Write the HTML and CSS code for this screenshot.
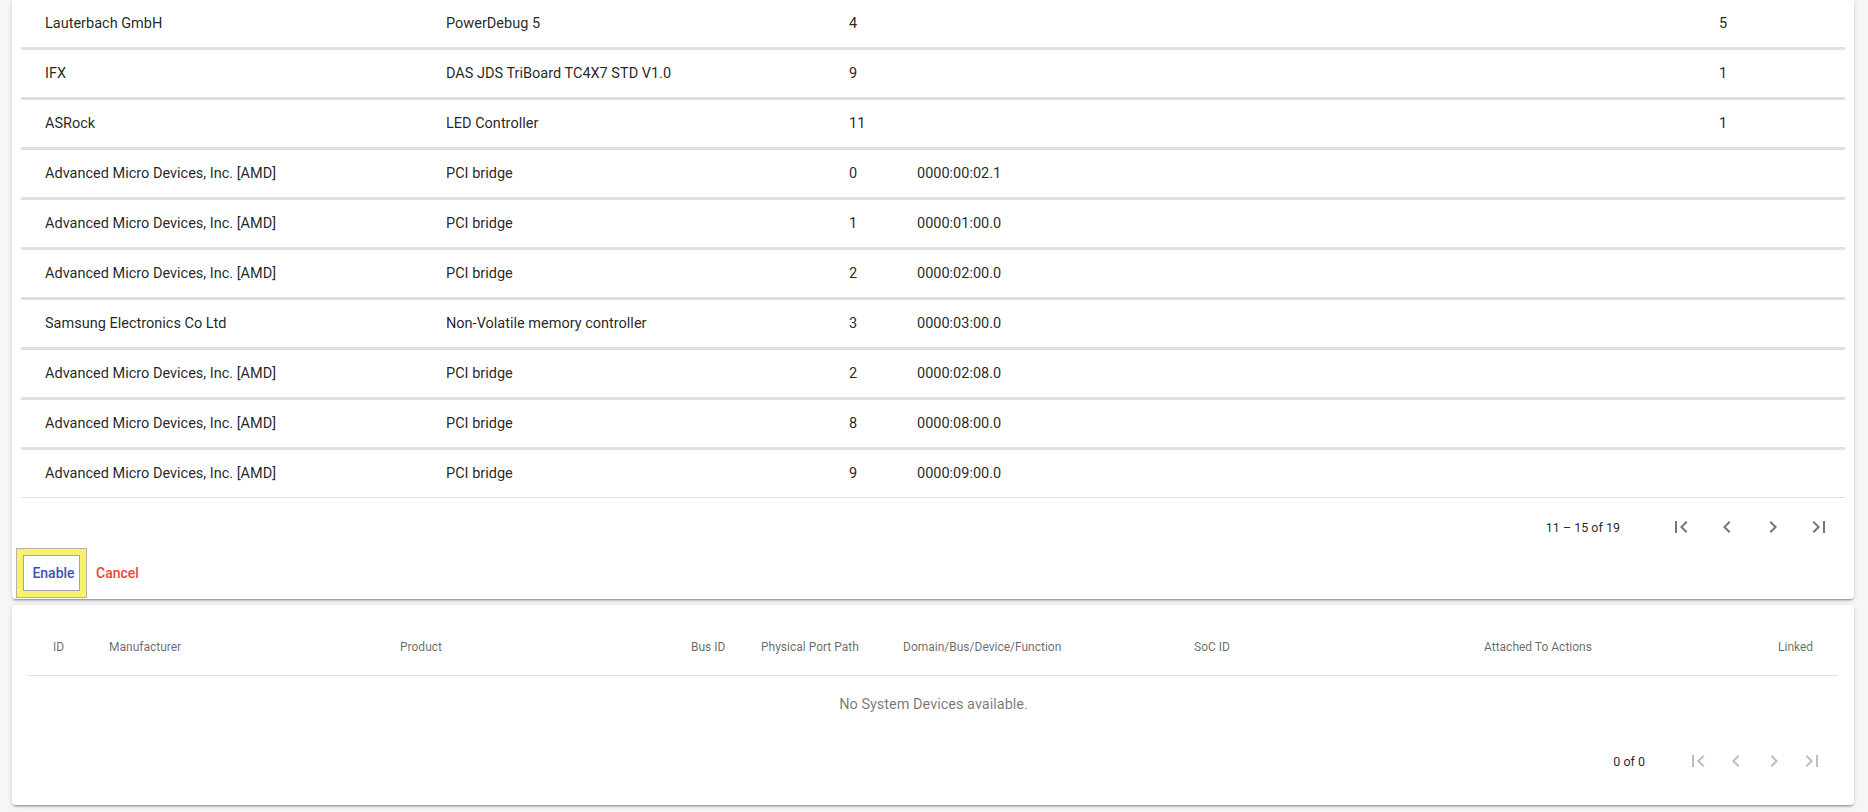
FILE: index.html
```html
<!DOCTYPE html>
<html>
<head>
<meta charset="utf-8">
<link rel="stylesheet" href="styles.css">
</head>
<body>
<div class="page">
  <section class="card card-top">
    <div class="table">
      <div class="row"><div class="c c1">Lauterbach GmbH</div><div class="c">PowerDebug 5</div><div class="c">4</div><div class="c"></div><div class="c">5</div></div>
      <div class="row"><div class="c c1">IFX</div><div class="c">DAS JDS TriBoard TC4X7 STD V1.0</div><div class="c">9</div><div class="c"></div><div class="c">1</div></div>
      <div class="row"><div class="c c1">ASRock</div><div class="c">LED Controller</div><div class="c">11</div><div class="c"></div><div class="c">1</div></div>
      <div class="row"><div class="c c1">Advanced Micro Devices, Inc. [AMD]</div><div class="c">PCI bridge</div><div class="c">0</div><div class="c">0000:00:02.1</div><div class="c"></div></div>
      <div class="row"><div class="c c1">Advanced Micro Devices, Inc. [AMD]</div><div class="c">PCI bridge</div><div class="c">1</div><div class="c">0000:01:00.0</div><div class="c"></div></div>
      <div class="row"><div class="c c1">Advanced Micro Devices, Inc. [AMD]</div><div class="c">PCI bridge</div><div class="c">2</div><div class="c">0000:02:00.0</div><div class="c"></div></div>
      <div class="row"><div class="c c1">Samsung Electronics Co Ltd</div><div class="c">Non-Volatile memory controller</div><div class="c">3</div><div class="c">0000:03:00.0</div><div class="c"></div></div>
      <div class="row"><div class="c c1">Advanced Micro Devices, Inc. [AMD]</div><div class="c">PCI bridge</div><div class="c">2</div><div class="c">0000:02:08.0</div><div class="c"></div></div>
      <div class="row"><div class="c c1">Advanced Micro Devices, Inc. [AMD]</div><div class="c">PCI bridge</div><div class="c">8</div><div class="c">0000:08:00.0</div><div class="c"></div></div>
      <div class="row row-last"><div class="c c1">Advanced Micro Devices, Inc. [AMD]</div><div class="c">PCI bridge</div><div class="c">9</div><div class="c">0000:09:00.0</div><div class="c"></div></div>
    </div>
    <div class="paginator pag-top">
      <span class="range">11 – 15 of 19</span>
      <span class="pbtn"><svg viewBox="0 0 24 24"><path d="M18.41 16.59L13.82 12l4.59-4.59L17 6l-6 6 6 6zM6 6h2v12H6z"/></svg></span>
      <span class="pbtn"><svg viewBox="0 0 24 24"><path d="M15.41 7.41L14 6l-6 6 6 6 1.41-1.41L10.83 12z"/></svg></span>
      <span class="pbtn"><svg viewBox="0 0 24 24"><path d="M10 6L8.59 7.41 13.17 12l-4.58 4.59L10 18l6-6z"/></svg></span>
      <span class="pbtn"><svg viewBox="0 0 24 24"><path d="M5.59 7.41L10.18 12l-4.59 4.59L7 18l6-6-6-6zM16 6h2v12h-2z"/></svg></span>
    </div>
    <div class="actions">
      <span class="focus-ring"><button class="btn btn-enable">Enable</button></span>
      <button class="btn btn-cancel">Cancel</button>
    </div>
  </section>

  <section class="card card-bottom">
    <div class="head">
      <div class="h h1">ID</div>
      <div class="h">Manufacturer</div>
      <div class="h">Product</div>
      <div class="h">Bus ID</div>
      <div class="h">Physical Port Path</div>
      <div class="h">Domain/Bus/Device/Function</div>
      <div class="h">SoC ID</div>
      <div class="h">Attached To Actions</div>
      <div class="h">Linked</div>
    </div>
    <div class="empty">No System Devices available.</div>
    <div class="paginator pag-bottom">
      <span class="range">0 of 0</span>
      <span class="pbtn"><svg viewBox="0 0 24 24"><path d="M18.41 16.59L13.82 12l4.59-4.59L17 6l-6 6 6 6zM6 6h2v12H6z"/></svg></span>
      <span class="pbtn"><svg viewBox="0 0 24 24"><path d="M15.41 7.41L14 6l-6 6 6 6 1.41-1.41L10.83 12z"/></svg></span>
      <span class="pbtn"><svg viewBox="0 0 24 24"><path d="M10 6L8.59 7.41 13.17 12l-4.58 4.59L10 18l6-6z"/></svg></span>
      <span class="pbtn"><svg viewBox="0 0 24 24"><path d="M5.59 7.41L10.18 12l-4.59 4.59L7 18l6-6-6-6zM16 6h2v12h-2z"/></svg></span>
    </div>
  </section>
</div>
</body>
</html>
```

FILE: styles.css
```css
html, body {
  margin: 0;
  padding: 0;
  background: #f6f6f6;
  font-family: Roboto, "Liberation Sans", Arial, sans-serif;
  color: rgba(0, 0, 0, 0.87);
  height: 812px;
  overflow: hidden;
}

.page {
  padding: 0 14px 0 12px;
}

.card {
  background: #fff;
  border-radius: 4px;
  box-shadow: 0 3px 1px -2px rgba(0,0,0,.2), 0 2px 2px 0 rgba(0,0,0,.14), 0 1px 5px 0 rgba(0,0,0,.12);
}

.card-top {
  border-radius: 0 0 4px 4px;
  padding: 0 9px;
}

.table {
  display: flex;
  flex-direction: column;
}

.row {
  display: grid;
  grid-template-columns: 425px 403px 68px 802px 1fr;
  height: 47px;
  align-items: center;
  border-bottom: 3px solid #e0e0e0;
  font-size: 14.5px;
}

.row-last {
  border-bottom: 1px solid #e0e0e0;
}

.c1 {
  padding-left: 24px;
}

.paginator {
  display: flex;
  align-items: center;
  justify-content: flex-end;
  font-size: 12.5px;
}

.pag-top {
  height: 40px;
  padding-top: 9px;
  margin-right: 3px;
}

.pag-top .range {
  margin-right: 38px;
}

.pag-top .pbtn {
  width: 46px;
  height: 40px;
}

.pbtn {
  display: flex;
  align-items: center;
  justify-content: center;
}

.pbtn svg {
  width: 24px;
  height: 24px;
  fill: rgba(0, 0, 0, 0.54);
}

.actions {
  display: flex;
  align-items: flex-start;
  height: 52px;
  margin-left: -5px;
}

.focus-ring {
  display: flex;
  align-items: center;
  justify-content: center;
  box-sizing: border-box;
  width: 71px;
  height: 50px;
  margin-top: 1px;
  background: #f8f06f;
  border: 1px solid #b4b4a0;
}

.btn {
  font-family: Roboto, "Liberation Sans", Arial, sans-serif;
  font-size: 14px;
  font-weight: 500;
  background: #fff;
  border: none;
  padding: 0;
  cursor: pointer;
}

.btn-enable {
  box-sizing: border-box;
  width: 57px;
  height: 36px;
  padding-left: 4px;
  border: 1px solid #a5a5a5;
  color: #3f51b5;
}

.btn-cancel {
  color: #f44336;
  background: transparent;
  margin-left: 9px;
  margin-top: 18px;
}

.card-bottom {
  margin-top: 6px;
  height: 200px;
  box-sizing: border-box;
  padding: 14px 16px 0 17px;
}

.head {
  display: grid;
  grid-template-columns: 80px 291px 291px 70px 142px 291px 290px 294px 1fr;
  height: 56px;
  align-items: center;
  border-bottom: 1px solid #e0e0e0;
  font-size: 12px;
  font-weight: 400;
  color: rgba(0, 0, 0, 0.6);
}

.h1 {
  padding-left: 24px;
}

.empty {
  height: 56px;
  display: flex;
  align-items: center;
  justify-content: center;
  font-size: 14.5px;
  color: rgba(0, 0, 0, 0.54);
}

.pag-bottom {
  margin-top: 1px;
  height: 56px;
  margin-right: 7px;
}

.pag-bottom .range {
  margin-right: 34px;
}

.pag-bottom .pbtn {
  width: 38px;
  height: 40px;
}

.pag-bottom .pbtn svg {
  fill: rgba(0, 0, 0, 0.26);
}
```
